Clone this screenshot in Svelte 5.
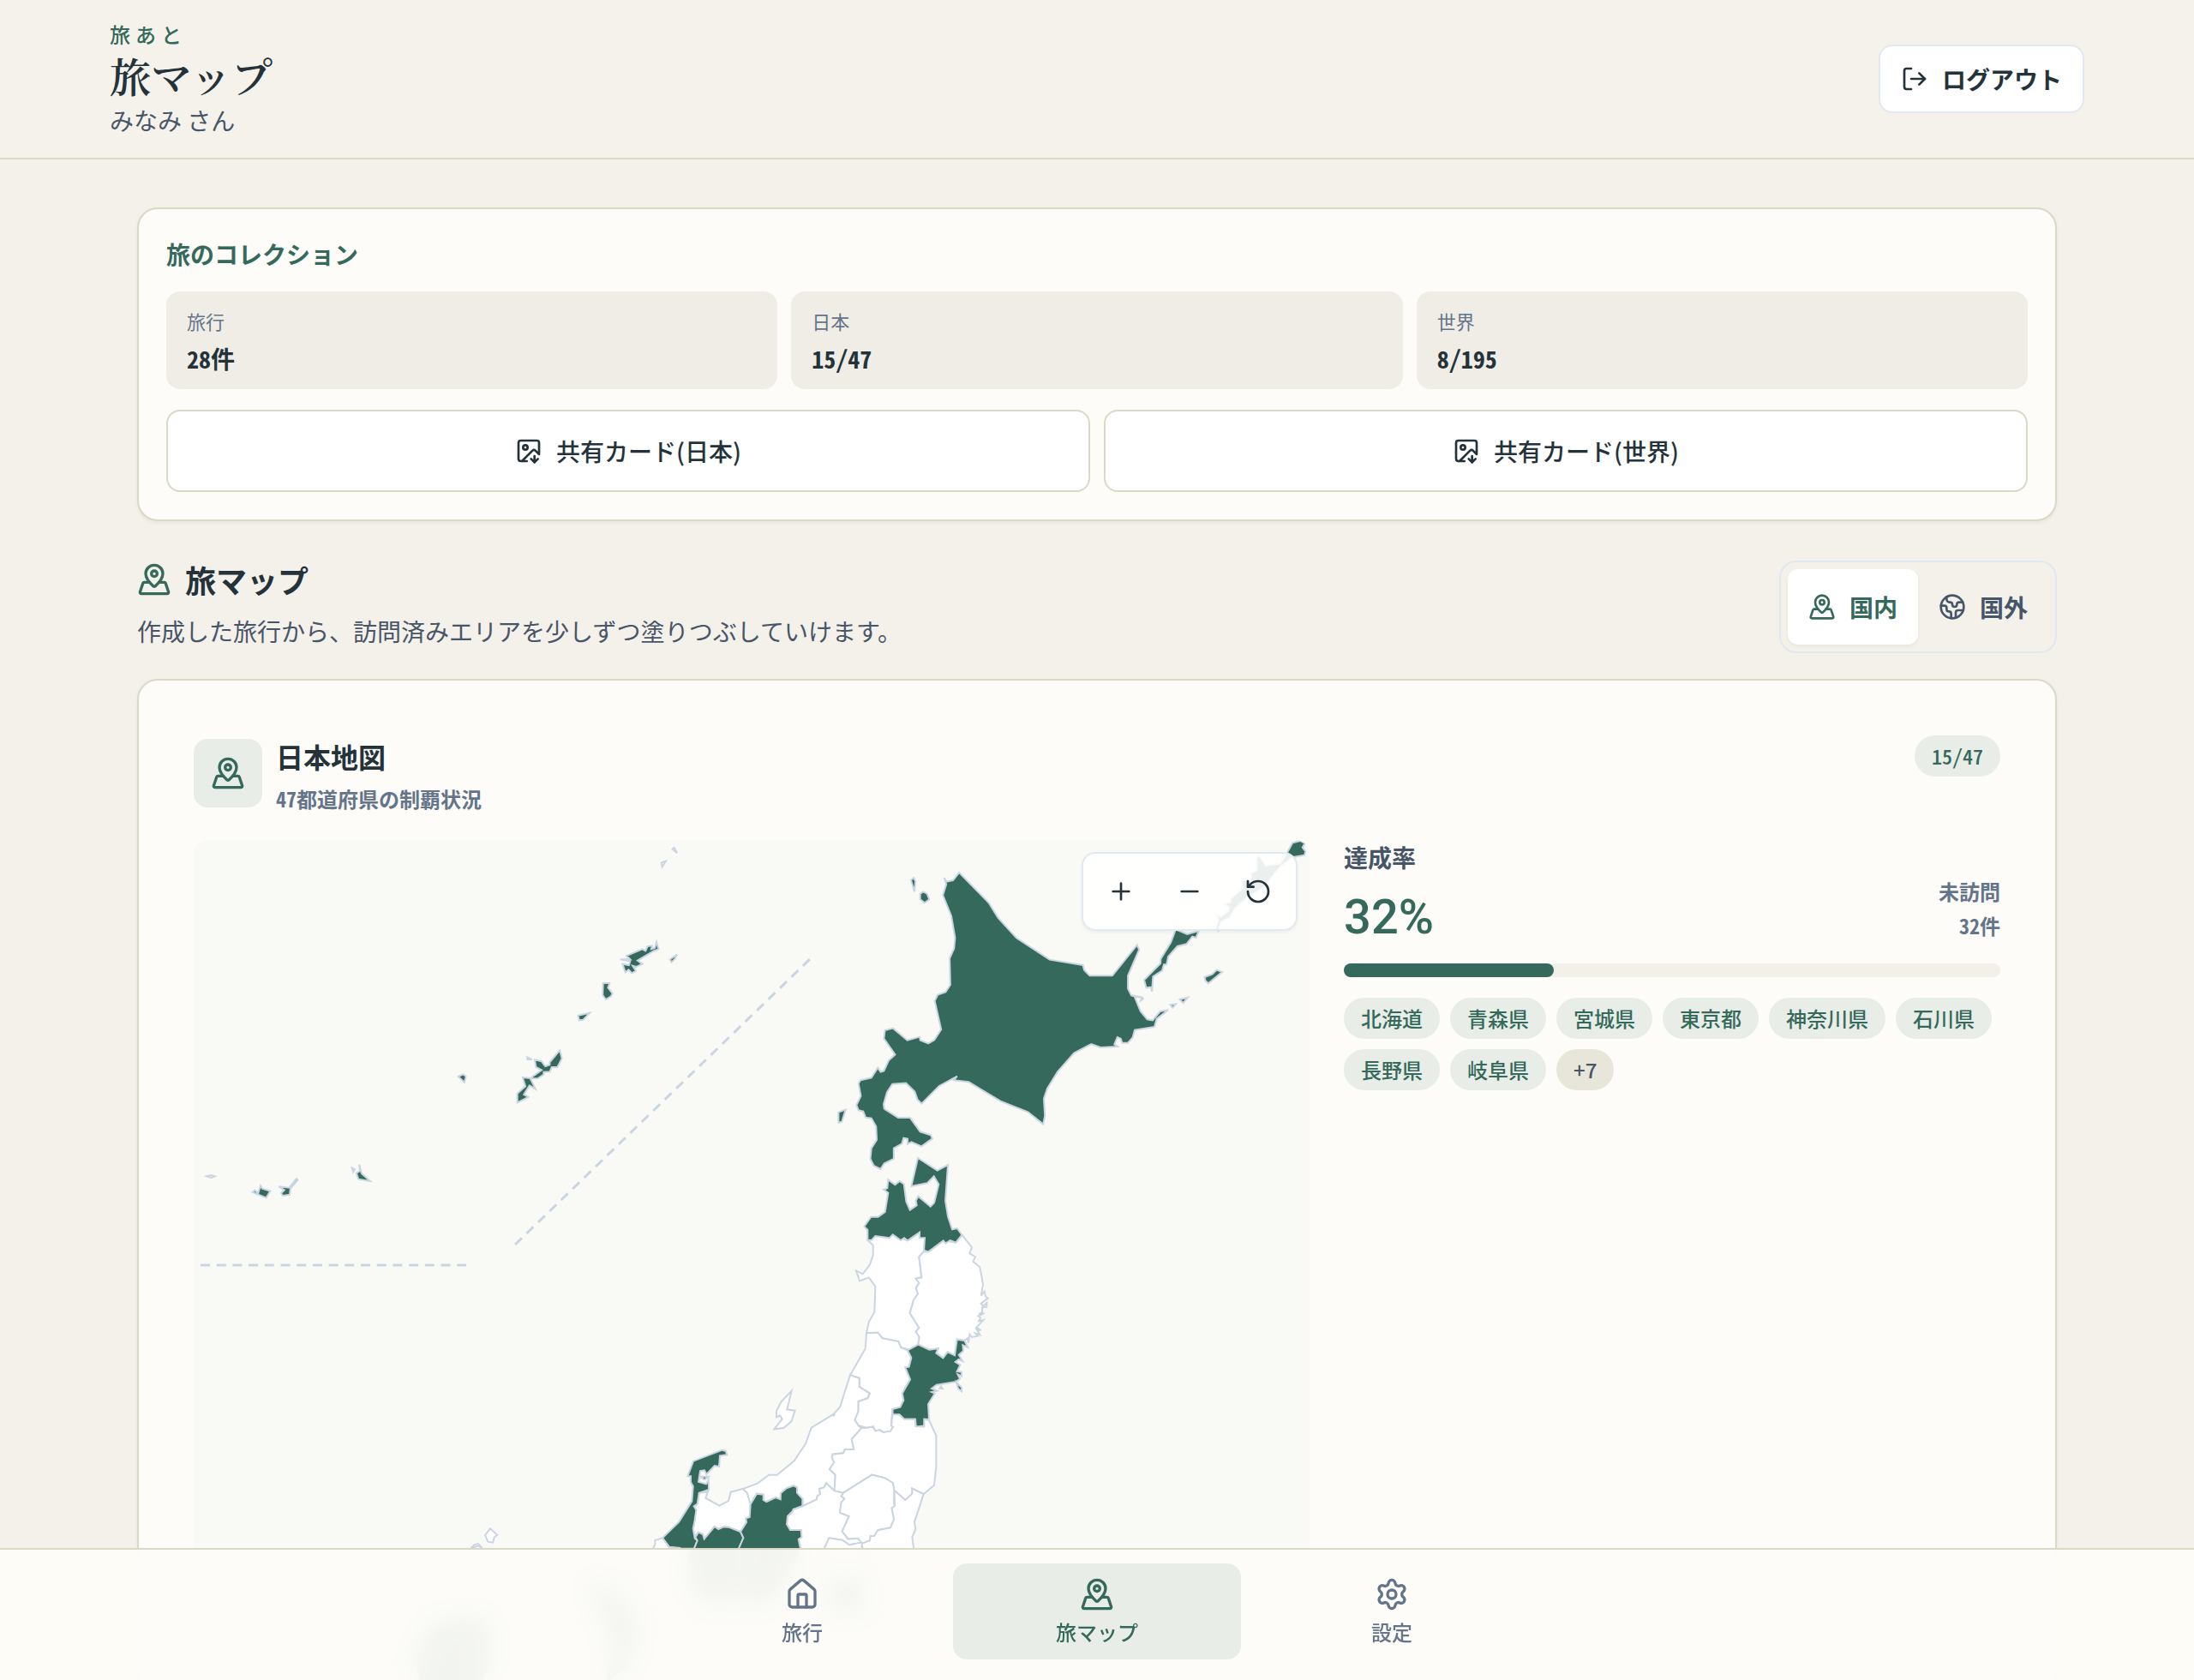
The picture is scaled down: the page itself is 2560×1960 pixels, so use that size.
<script lang="ts">
	type Shape = { d: string; visited?: boolean };
	type Layer = { transform: string; shapes: Shape[] };

	const stats = [
		{ label: '旅行', value: '28件' },
		{ label: '日本', value: '15/47' },
		{ label: '世界', value: '8/195' }
	];

	const visitedNames = ['北海道', '青森県', '宮城県', '東京都', '神奈川県', '石川県', '長野県', '岐阜県'];
	const rate = 32;

	const layers: Layer[] = [
		{
			// 北海道
			transform: 'translate(714 -20) scale(0.3954 0.3333)',
			shapes: [
				{
					visited: true,
					d: 'M409 192L416 206L435 201L453 174L541 281L568 333L622 403L720 479L818 498L822 515L838 535H905L978 427L984 444L951 535V580L961 604L970 607L988 659L1008 688L1024 691L1046 660L1070 655L1036 686L1029 714L971 725L965 751L951 770H934L930 755L920 750L911 775L921 783L870 786L843 774L792 806L744 870L713 930L703 965L706 1025L701 1055L656 1012L575 974L481 907L437 901L447 887L394 921L342 983L330 968L322 941L296 911L256 914L240 943L230 985L232 1001L273 1032H308L338 1081L369 1093L374 1105L342 1132L312 1117L301 1124V1106L289 1103L284 1123L260 1139V1176L232 1192L221 1212L201 1200L191 1176L194 1139L210 1109L208 1063L194 1034L177 1031L170 1010L156 1006L150 988L163 956L156 912L162 901L194 892L213 857L221 872L231 868L245 832L264 811L231 755L234 726L258 719L300 761L337 749L338 761L362 772L380 760L400 723L381 623L390 602L413 592L427 567L425 474L438 440L441 402L430 326L405 253L415 215Z'
				},
				{ visited: true, d: 'M311 200L319 192L324 205L321 241Z' },
				{ visited: true, d: 'M347 241L358 248L365 268L351 280L338 268V248Z' },
				{ visited: true, d: 'M97 1013L118 1004L107 1046L97 1049Z' },
				{
					visited: true,
					d: 'M1092 373L1126 390L1160 378L1152 402L1141 398L1124 424L1097 432L1070 468L1065 496H1057L1052 517L1025 538L1022 590L1019 575L1005 577L999 550L1047 492L1048 476L1078 418Z'
				},
				{ visited: true, d: 'M1177 540L1200 530L1213 515L1229 522L1188 562L1180 553Z' },
				{ visited: true, d: 'M1104 618L1128 611L1114 630Z' },
				{ visited: true, d: 'M1076 637L1092 634L1083 647Z' },
				{ d: 'M963 604L993 611L996 616L989 622L992 613Z' },
				{
					visited: true,
					d: 'M1421 104L1437 70L1460 63L1473 72L1466 86L1475 100L1472 113L1438 120L1400 155L1375 192L1350 228L1302 262L1267 300L1250 335L1238 338L1225 350L1218 378L1209 372L1218 340L1212 322L1224 328L1248 308L1250 296L1234 282L1253 278L1256 262L1290 230L1286 198L1312 204L1315 175L1332 165L1330 125L1338 114L1358 150L1400 142Z'
				}
			]
		},
		{
			// 東北
			transform: 'translate(714 360) scale(0.3333)',
			shapes: [
				{
					d: 'M217 320L236 338V373L225 406L200 439L177 428L189 463L221 451L244 483L241 572L221 607L213 646L253 644L269 664L325 675L333 696L365 705L394 686L398 660L386 641L397 627L365 576L378 530L393 508L386 488L397 471L386 455L406 451L397 379L414 360L417 313L399 293L357 322L305 301L244 306Z'
				},
				{
					d: 'M414 360L397 379L406 451L386 455L397 471L386 488L393 508L378 530L365 576L397 627L386 641L398 660L394 686L433 704L464 700L457 716L481 733L497 712L522 724L530 668L556 672L566 664L570 680L574 650L582 660L602 656L594 646L610 652L598 632L614 636L598 626L622 600L606 604L612 592L604 586L625 576L606 580L618 572V556L634 554V540L622 552L614 542L638 524L630 518L626 500L614 515L621 475L610 415L586 395L594 379L574 367L582 346L547 302L526 329L482 322L430 361Z'
				},
				{
					d: 'M213 646L209 700L156 793L188 803V833L225 857L217 874L184 885V917L172 949L185 969L213 977L237 973L244 988L261 985L273 993L297 990L307 973L299 969L304 912L331 905L343 881L338 857L366 808L349 766L362 764L370 732L357 706L333 696L325 675L269 664L253 644Z'
				},
				{
					visited: true,
					d: 'M393 33L461 77L498 57L489 183L498 238L513 283L530 279L547 302L526 329L506 321L490 332L482 322L430 361L414 356L417 313H399V293L357 322L345 313L333 321L305 301L293 313L244 306L231 320H217V285L205 273L229 239H254L278 222L289 155L273 143L286 139L289 109L313 127L329 114L344 124L352 185L365 215L389 199L386 182L394 167L437 203L450 190L466 125L449 97L425 121L370 132Z'
				},
				{
					visited: true,
					d: 'M394 686L433 704L464 700L457 716L481 733L497 712L522 724L530 668L556 672L568 696L550 688L552 708L536 722L550 744L536 738L524 747L541 757L530 780L546 782V796L532 790L540 806L526 816L458 827L441 840L460 848L441 852L452 857L429 895L432 947H416V970L400 972L404 980L386 972L384 947H345L329 932H305L304 912L331 905L343 881L338 857L366 808L349 766L362 764L370 732L357 706Z'
				},
				{ visited: true, d: 'M528 818L546 836V850L534 840Z' },
				{ d: 'M469 839L474 832L479 840Z' }
			]
		},
		{
			// 中部・関東
			transform: 'translate(474 580) scale(0.3333)',
			shapes: [
				{
					d: 'M876 132L908 144V174L944 197L937 213L904 225V260L892 290L905 310L916 318L881 357L889 393H857L852 406L815 410L812 422L820 438L804 462L824 482L821 538L792 511L784 526L768 531L771 550L761 556L759 568L711 591L709 566L689 545L690 526L678 520L653 529L633 546L632 568L615 561L583 576L572 570V551L549 548L527 585L524 579L515 545L500 531L553 511L591 482H620L680 433L720 373L740 317L817 270L820 277V267L840 245Z'
				},
				{ d: 'M671 188L635 225L618 258V280L630 274L638 286L610 322L643 318L670 295L683 257L655 253Z' },
				{
					d: 'M916 318L881 357L889 393H857L852 406L815 410L812 422L820 438L804 462L824 482L821 538L852 545L952 482L998 493L1025 510L1030 536L1069 570L1093 548V530L1133 549L1170 518L1177 455V345L1152 290L1135 287V313L1105 312L1103 287H1065L1048 271H1024L1020 310L1026 314L1017 329L992 333L978 325L964 329L956 314L930 318Z'
				},
				{
					d: 'M821 538L792 511L784 526L768 531L771 550L761 556L759 568L711 591L677 602L674 610L657 626L654 655L666 675H704L706 700L695 708L702 735L740 800L785 740L802 703L848 710L873 727L916 720L905 704L869 706L848 680L872 627L840 614L845 578L856 566L845 556L852 545Z'
				},
				{
					d: 'M1030 536L1069 570L1093 548V530L1133 549L1101 647L1105 672L1093 700L1101 760L1000 860L920 740L916 722L944 712L947 696L960 695L973 675L1017 666L1029 637L1021 598L1032 590Z'
				},
				{
					d: 'M852 545L952 482L998 493L1025 510L1030 536L1029 580L1032 590L1021 598L1029 637L1017 666L973 675L960 695L947 696L944 712L916 722L905 704L869 706L848 680L872 627L840 614L845 578L856 566L845 556Z'
				},
				{ d: 'M785 740L802 703L848 710L873 727L916 718L922 800L790 800Z' },
				{
					d: 'M500 531L458 542L450 573L418 590L370 563L378 540L347 545L341 584L329 592L337 605L330 620L332 640L326 670L330 700L345 683L360 690L365 706L401 663L415 672L432 664L450 665L492 681L513 648L511 634L524 630L527 585L515 545Z'
				},
				{
					visited: true,
					d: 'M428 395L440 398L445 412L420 415L417 453L401 450L373 480L366 466L351 468L345 506L372 514L380 500L381 534L347 545L341 584L329 592L337 605L332 640L326 670L332 704L341 712L330 740H280L242 734L219 703L277 646L322 574L326 522L318 508V487H307L327 434Z'
				},
				{ visited: true, d: 'M352 488H380L366 499Z' },
				{
					visited: true,
					d: 'M330 740L341 712L334 700L345 683L360 690L365 706L401 663L415 672L432 664L450 665L492 681L502 702L486 740L470 900L420 960L320 900L300 760Z'
				},
				{
					visited: true,
					d: 'M492 681L513 648L511 634L524 630L527 585L549 548L572 551V570L583 576L615 561L632 568L633 546L653 529L678 520L690 526V545L709 566V591L677 602L674 610L657 626L654 655L666 675H704L706 700L695 708L702 740L690 780L620 920L500 960L486 740L502 702Z'
				},
				{ d: 'M219 703L193 711V727L180 750L200 800L280 760V738L242 734Z' },
				{ visited: true, d: 'M780 850L930 830L920 980L810 960Z' }
			]
		},
		{
			// 隠岐・近畿・中国
			transform: 'translate(214 800) scale(0.829 0.3333)',
			shapes: [
				{ d: 'M159 10L169 32L165 40L163 59L156 56L152 33Z' },
				{ d: 'M132 78L137 66L142 63L148 78L143 70Z' },
				{ visited: true, d: 'M290 180L330 210L370 330L360 480L320 560L330 400Z' },
				{ visited: true, d: 'M80 330L155 310L165 420L150 540L60 560L50 440Z' }
			]
		},
		{
			// 沖縄・奄美
			transform: 'translate(-6 -10) scale(0.4719 0.3333)',
			shapes: [
				{ d: 'M1196 62L1201 57L1208 76Z' },
				{ d: 'M1169 109L1180 104L1171 124Z' },
				{
					visited: true,
					d: 'M1157 387L1162 412L1150 418L1110 452L1122 464L1107 474L1098 470L1106 488L1096 496L1088 484L1080 493L1073 464L1089 468L1092 454L1067 448L1092 448L1083 435L1122 412L1130 418L1135 402L1146 400L1144 412L1153 408Z'
				},
				{ visited: true, d: 'M1190 448L1208 431L1202 447L1194 458Z' },
				{ visited: true, d: 'M1025 531H1041L1037 547L1048 567L1045 576L1032 588L1024 573Z' },
				{ visited: true, d: 'M963 644L992 635L976 659L966 661Z' },
				{
					visited: true,
					d: 'M918 766L923 795L912 825H898L893 841L878 842V851L864 864L845 865L858 902L843 889L829 921L840 930L813 949V917L833 892L826 861L845 864L873 835L859 825L856 799L873 805L882 822L893 817V808Z'
				},
				{ d: 'M837 790L849 798H838Z' },
				{ visited: true, d: 'M667 858L679 850L686 858L682 878Z' },
				{ visited: true, d: 'M422 1166L428 1198L449 1224L420 1217L415 1196L424 1188Z' },
				{ d: 'M404 1177L411 1183L407 1192Z' },
				{ d: 'M45 1207L56 1203L65 1207L56 1212Z' },
				{ visited: true, d: 'M178 1240L182 1250L202 1259L192 1282L158 1263L164 1256L172 1267Z' },
				{ visited: true, d: 'M267 1215L270 1220L252 1250L250 1271L233 1275L229 1266L237 1255L223 1243L249 1247Z' }
			]
		}
	];

	let scope = $state('domestic');
	let zoom = $state(1);
</script>

{#snippet mapPinned()}
	<svg class="icon" viewBox="0 0 24 24" aria-hidden="true">
		<path d="M18 8c0 3.613-3.869 7.429-5.393 8.795a1 1 0 0 1-1.214 0C9.87 15.429 6 11.613 6 8a6 6 0 0 1 12 0" />
		<circle cx="12" cy="8" r="2" />
		<path d="M8.714 14h-3.71a1 1 0 0 0-.948.683l-2.004 6A1 1 0 0 0 3 22h18a1 1 0 0 0 .948-1.316l-2-6a1 1 0 0 0-.949-.684h-3.712" />
	</svg>
{/snippet}

{#snippet imageDown()}
	<svg class="icon" viewBox="0 0 24 24" aria-hidden="true">
		<path d="M10.3 21H5a2 2 0 0 1-2-2V5a2 2 0 0 1 2-2h14a2 2 0 0 1 2 2v10l-3.1-3.1a2 2 0 0 0-2.814.014L6 21" />
		<path d="m14 19 3 3v-5.500" />
		<path d="m17 22 3-3" />
		<circle cx="9" cy="9" r="2" />
	</svg>
{/snippet}

<div class="app">
	<header class="site-header">
		<div class="header-inner">
			<div>
				<p class="brand">旅あと</p>
				<h1>旅マップ</h1>
				<p class="user">みなみ さん</p>
			</div>
			<button class="logout" type="button">
				<svg class="icon" viewBox="0 0 24 24" aria-hidden="true">
					<path d="m16 17 5-5-5-5" />
					<path d="M21 12H9" />
					<path d="M9 21H5a2 2 0 0 1-2-2V5a2 2 0 0 1 2-2h4" />
				</svg>
				ログアウト
			</button>
		</div>
	</header>

	<main>
		<section class="card collection">
			<h2>旅のコレクション</h2>
			<dl class="stats">
				{#each stats as stat}
					<div class="stat">
						<dt>{stat.label}</dt>
						<dd>{stat.value}</dd>
					</div>
				{/each}
			</dl>
			<div class="share">
				<button type="button">{@render imageDown()}共有カード(日本)</button>
				<button type="button">{@render imageDown()}共有カード(世界)</button>
			</div>
		</section>

		<div class="section-head">
			<div>
				<h2>{@render mapPinned()}旅マップ</h2>
				<p>作成した旅行から、訪問済みエリアを少しずつ塗りつぶしていけます。</p>
			</div>
			<div class="switch">
				<button type="button" aria-pressed={scope === 'domestic'} onclick={() => (scope = 'domestic')}>
					{@render mapPinned()}国内
				</button>
				<button type="button" aria-pressed={scope === 'overseas'} onclick={() => (scope = 'overseas')}>
					<svg class="icon" viewBox="0 0 24 24" aria-hidden="true">
						<path d="M21.54 15H17a2 2 0 0 0-2 2v4.54" />
						<path d="M7 3.34V5a3 3 0 0 0 3 3a2 2 0 0 1 2 2c0 1.1.9 2 2 2a2 2 0 0 0 2-2c0-1.1.9-2 2-2h3.17" />
						<path d="M11 21.95V18a2 2 0 0 0-2-2a2 2 0 0 1-2-2v-1a2 2 0 0 0-2-2H2.05" />
						<circle cx="12" cy="12" r="10" />
					</svg>
					国外
				</button>
			</div>
		</div>

		<section class="card map-card">
			<div class="map-head">
				<div class="map-title">
					<span class="tile">{@render mapPinned()}</span>
					<div>
						<h3>日本地図</h3>
						<p>47都道府県の制覇状況</p>
					</div>
				</div>
				<span class="chip count">15/47</span>
			</div>

			<div class="map-body">
				<div class="map-panel">
					<svg class="map" viewBox="0 0 1302 1302" role="img" aria-label="日本地図">
						<g transform="scale({zoom})">
							<path class="divider" d="M375 472L722 136M8 496H318" />
							{#each layers as layer}
								<g transform={layer.transform}>
									{#each layer.shapes as shape}
										<path class="area" class:visited={shape.visited} d={shape.d} />
									{/each}
								</g>
							{/each}
						</g>
					</svg>
					<div class="zoom">
						<button type="button" aria-label="拡大" onclick={() => (zoom = Math.min(zoom * 1.25, 4))}>
							<svg class="icon" viewBox="0 0 24 24"><path d="M5 12h14M12 5v14" /></svg>
						</button>
						<button type="button" aria-label="縮小" onclick={() => (zoom = Math.max(zoom / 1.25, 1))}>
							<svg class="icon" viewBox="0 0 24 24"><path d="M5 12h14" /></svg>
						</button>
						<button type="button" aria-label="リセット" onclick={() => (zoom = 1)}>
							<svg class="icon" viewBox="0 0 24 24">
								<path d="M3 12a9 9 0 1 0 9-9 9.750 9.750 0 0 0-6.740 2.740L3 8" />
								<path d="M3 3v5h5" />
							</svg>
						</button>
					</div>
				</div>

				<div class="progress">
					<div class="progress-head">
						<div>
							<h4>達成率</h4>
							<p class="rate">{rate}%</p>
						</div>
						<p class="remaining">未訪問<br />32件</p>
					</div>
					<div class="bar" role="progressbar" aria-label="達成率" aria-valuenow={rate} aria-valuemin="0" aria-valuemax="100">
						<div class="fill" style="width: {rate}%"></div>
					</div>
					<ul class="chips">
						{#each visitedNames as name}
							<li class="chip">{name}</li>
						{/each}
						<li class="chip more">+7</li>
					</ul>
				</div>
			</div>
		</section>
	</main>

	<nav>
		<a href="#trips">
			<svg class="icon" viewBox="0 0 24 24" aria-hidden="true">
				<path d="M15 21v-8a1 1 0 0 0-1-1h-4a1 1 0 0 0-1 1v8" />
				<path d="M3 10a2 2 0 0 1 .709-1.528l7-6a2 2 0 0 1 2.582 0l7 6A2 2 0 0 1 21 10v9a2 2 0 0 1-2 2H5a2 2 0 0 1-2-2z" />
			</svg>
			旅行
		</a>
		<a href="#map" aria-current="page">{@render mapPinned()}旅マップ</a>
		<a href="#settings">
			<svg class="icon" viewBox="0 0 24 24" aria-hidden="true">
				<path d="M9.671 4.136a2.340 2.340 0 0 1 4.659 0 2.340 2.340 0 0 0 3.319 1.915 2.340 2.340 0 0 1 2.330 4.033 2.340 2.340 0 0 0 0 3.831 2.340 2.340 0 0 1-2.330 4.033 2.340 2.340 0 0 0-3.319 1.915 2.340 2.340 0 0 1-4.659 0 2.340 2.340 0 0 0-3.320-1.915 2.340 2.340 0 0 1-2.330-4.033 2.340 2.340 0 0 0 0-3.831A2.340 2.340 0 0 1 6.350 6.051a2.340 2.340 0 0 0 3.319-1.915" />
				<circle cx="12" cy="12" r="3" />
			</svg>
			設定
		</a>
	</nav>
</div>

<style>
	:global(body) {
		background: #f4f0ea;
	}
	.app {
		--green: #35695b;
		--ink: #24323a;
		--slate: #475569;
		--muted: #64748b;
		--line: #dad9c6;
		--mist: #e8ede7;
		height: 100vh;
		overflow: hidden auto;
		scrollbar-width: none;
		background: #f4f0ea;
		color: var(--ink);
		font: 400 28px/44px 'Noto Sans CJK JP', sans-serif;
	}
	.app * {
		box-sizing: border-box;
	}
	h1,
	h2,
	h3,
	h4,
	p,
	dl,
	dd,
	ul {
		margin: 0;
		padding: 0;
	}
	button {
		display: flex;
		align-items: center;
		justify-content: center;
		gap: 16px;
		border: 0;
		padding: 0;
		background: none;
		color: inherit;
		font: inherit;
		cursor: pointer;
	}
	.icon {
		flex: none;
		width: 32px;
		height: 32px;
		fill: none;
		stroke: currentColor;
		stroke-width: 2;
		stroke-linecap: round;
		stroke-linejoin: round;
	}

	.site-header {
		border-bottom: 2px solid var(--line);
		background: #f5f2eb;
	}
	.header-inner {
		display: flex;
		align-items: center;
		justify-content: space-between;
		max-width: 2304px;
		margin: 0 auto;
		padding: 24px 0;
	}
	.brand {
		color: var(--green);
		font-size: 24px;
		font-weight: 500;
		line-height: 32px;
		letter-spacing: 6px;
	}
	h1 {
		font-family: 'Noto Serif CJK JP', 'Noto Serif JP', 'Noto Sans CJK JP', serif;
		font-size: 48px;
		font-weight: 600;
		line-height: 64px;
	}
	.user {
		color: var(--slate);
		line-height: 40px;
	}
	.logout {
		height: 80px;
		padding: 0 24px;
		border: 2px solid #e2e8f0;
		border-radius: 16px;
		background: #fff;
		font-weight: 700;
	}

	main {
		max-width: 2304px;
		margin: 0 auto;
		padding: 56px 32px 192px;
	}
	.card {
		border: 2px solid var(--line);
		border-radius: 24px;
		background: #fdfcf8;
		box-shadow: 0 2px 4px rgb(0 0 0 / 5%);
	}
	.collection {
		padding: 32px;
	}
	.collection h2 {
		margin-bottom: 24px;
		color: var(--green);
		font-size: 28px;
		font-weight: 700;
		line-height: 40px;
	}
	.stats {
		display: grid;
		grid-template-columns: repeat(3, 1fr);
		gap: 16px;
	}
	.stat {
		padding: 16px 24px;
		border-radius: 16px;
		background: #efede5;
	}
	dt {
		margin-bottom: 6px;
		color: var(--muted);
		font-size: 22px;
		line-height: 36px;
	}
	dd {
		font-weight: 700;
		line-height: 40px;
	}
	/* half-width figures */
	dd,
	.map-title p,
	.count,
	.remaining {
		font-feature-settings: 'hwid';
	}
	.share {
		display: grid;
		grid-template-columns: 1fr 1fr;
		gap: 16px;
		margin-top: 24px;
	}
	.share button {
		height: 96px;
		border: 2px solid var(--line);
		border-radius: 16px;
		background: #fff;
		font-weight: 500;
	}

	.section-head {
		display: flex;
		align-items: flex-start;
		justify-content: space-between;
		margin: 46px 0 30px;
	}
	.section-head h2 {
		display: flex;
		align-items: center;
		gap: 16px;
		margin-bottom: 16px;
		font-size: 36px;
		font-weight: 700;
		line-height: 44px;
	}
	.section-head h2 .icon,
	.tile .icon {
		width: 40px;
		height: 40px;
		color: var(--green);
	}
	.section-head p {
		color: var(--slate);
	}
	.switch {
		display: flex;
		padding: 8px;
		border: 2px solid #e2e8f0;
		border-radius: 20px;
	}
	.switch button {
		height: 88px;
		padding: 0 24px;
		border-radius: 12px;
		color: var(--slate);
		font-weight: 700;
	}
	.switch button[aria-pressed='true'] {
		background: #fff;
		box-shadow: 0 2px 4px rgb(0 0 0 / 5%);
		color: var(--green);
	}

	.map-card {
		padding: 64px;
	}
	.map-head {
		display: flex;
		align-items: flex-start;
		justify-content: space-between;
		margin-bottom: 26px;
	}
	.map-title {
		display: flex;
		align-items: flex-start;
		gap: 16px;
		padding-top: 4px;
	}
	.tile {
		display: grid;
		place-items: center;
		width: 80px;
		height: 80px;
		border-radius: 16px;
		background: var(--mist);
	}
	h3 {
		margin-bottom: 8px;
		font-size: 32px;
		font-weight: 700;
		line-height: 40px;
	}
	.map-title p {
		color: var(--muted);
		font-size: 24px;
		font-weight: 700;
		line-height: 44px;
	}
	.chip {
		padding: 0 20px;
		border-radius: 24px;
		background: var(--mist);
		color: var(--green);
		font-size: 24px;
		font-weight: 500;
		line-height: 48px;
	}
	.more {
		background: #e8e6da;
		color: var(--slate);
	}
	.map-body {
		display: grid;
		grid-template-columns: 1.7fr 1fr;
		gap: 40px;
	}
	.map-panel {
		position: relative;
		overflow: hidden;
		border-radius: 16px;
		background: #f9faf6;
	}
	.map {
		display: block;
		width: 100%;
	}
	.area {
		fill: #fff;
		stroke: #cbd5e1;
		stroke-width: 2;
		vector-effect: non-scaling-stroke;
	}
	.visited {
		fill: var(--green);
	}
	.divider {
		fill: none;
		stroke: #cbd5e1;
		stroke-width: 3;
		stroke-dasharray: 11 7.7;
	}
	.zoom {
		position: absolute;
		top: 14px;
		right: 14px;
		display: flex;
		padding: 4px;
		border: 2px solid #e2e8f0;
		border-radius: 16px;
		background: rgb(255 255 255 / 90%);
		box-shadow: 0 2px 4px rgb(0 0 0 / 5%);
	}
	.zoom button {
		width: 80px;
		height: 80px;
	}

	.progress-head {
		display: flex;
		align-items: flex-end;
		justify-content: space-between;
	}
	h4 {
		margin-bottom: 20px;
		color: var(--slate);
		font-size: 28px;
		font-weight: 700;
		line-height: 40px;
	}
	.rate {
		color: var(--green);
		font-family: Roboto, sans-serif;
		font-size: 56px;
		font-weight: 500;
		line-height: 60px;
	}
	.remaining {
		color: var(--muted);
		font-size: 24px;
		font-weight: 700;
		line-height: 40px;
		text-align: right;
	}
	.bar {
		height: 16px;
		margin: 24px 0;
		border-radius: 8px;
		background: #f3f0ea;
	}
	.fill {
		height: 100%;
		border-radius: 8px;
		background: var(--green);
	}
	.chips {
		display: flex;
		flex-wrap: wrap;
		gap: 12px;
		list-style: none;
	}

	nav {
		position: fixed;
		inset: auto 0 0;
		display: flex;
		justify-content: center;
		gap: 8px;
		padding: 16px 16px 24px;
		border-top: 2px solid var(--line);
		background: rgb(253 252 248 / 95%);
		backdrop-filter: blur(16px);
	}
	nav a {
		display: flex;
		flex: 0 1 336px;
		flex-direction: column;
		align-items: center;
		gap: 4px;
		height: 112px;
		padding-top: 16px;
		border-radius: 16px;
		color: var(--muted);
		font-size: 24px;
		font-weight: 500;
		line-height: 40px;
		text-decoration: none;
	}
	nav a[aria-current='page'] {
		background: var(--mist);
		color: var(--green);
	}
	nav .icon {
		width: 40px;
		height: 40px;
	}
</style>
